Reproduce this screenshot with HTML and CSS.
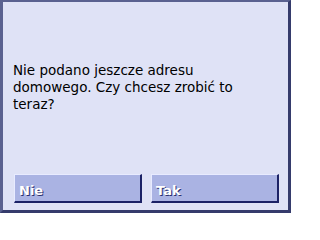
FILE: index.html
```html
<!DOCTYPE html>
<html lang="pl">
<head>
<meta charset="utf-8">
<link rel="stylesheet" href="styles.css">
</head>
<body>
<div class="dialog">
  <div class="message">Nie podano jeszcze adresu domowego. Czy chcesz zrobić to teraz?</div>
  <div class="buttons">
    <button class="btn">Nie</button>
    <button class="btn">Tak</button>
  </div>
</div>
</body>
</html>
```
FILE: styles.css
```css
html, body {
  margin: 0;
  padding: 0;
  width: 291px;
  height: 213px;
  overflow: hidden;
}
.dialog {
  box-sizing: border-box;
  width: 291px;
  height: 213px;
  background: #dfe2f6;
  border-style: solid;
  border-width: 2px 3px 3px 3px;
  border-color: #5a6190 #353b6c #353b6c #5a6190;
  display: flex;
  flex-direction: column;
  font-family: "DejaVu Sans", sans-serif;
}
.message {
  width: 250px;
  margin: 60px 0 0 10px;
  font-size: 13.5px;
  line-height: 17px;
  color: #000;
}
.buttons {
  margin-top: auto;
  margin-bottom: 7px;
  padding: 0 9px 0 11px;
  display: grid;
  grid-template-columns: 1fr 1fr;
  gap: 9px;
}
.btn {
  box-sizing: border-box;
  height: 29px;
  background: #aab3e3;
  border-style: solid;
  border-width: 1px 2px 2px 1px;
  border-color: #e8ebff #1c2266 #1c2266 #e8ebff;
  text-align: left;
  padding: 5px 0 0 4px;
  font-family: "DejaVu Sans", sans-serif;
  font-size: 13px;
  font-weight: bold;
  color: #fff;
  text-shadow: 1px 1px 0 #2a3070;
}
```
